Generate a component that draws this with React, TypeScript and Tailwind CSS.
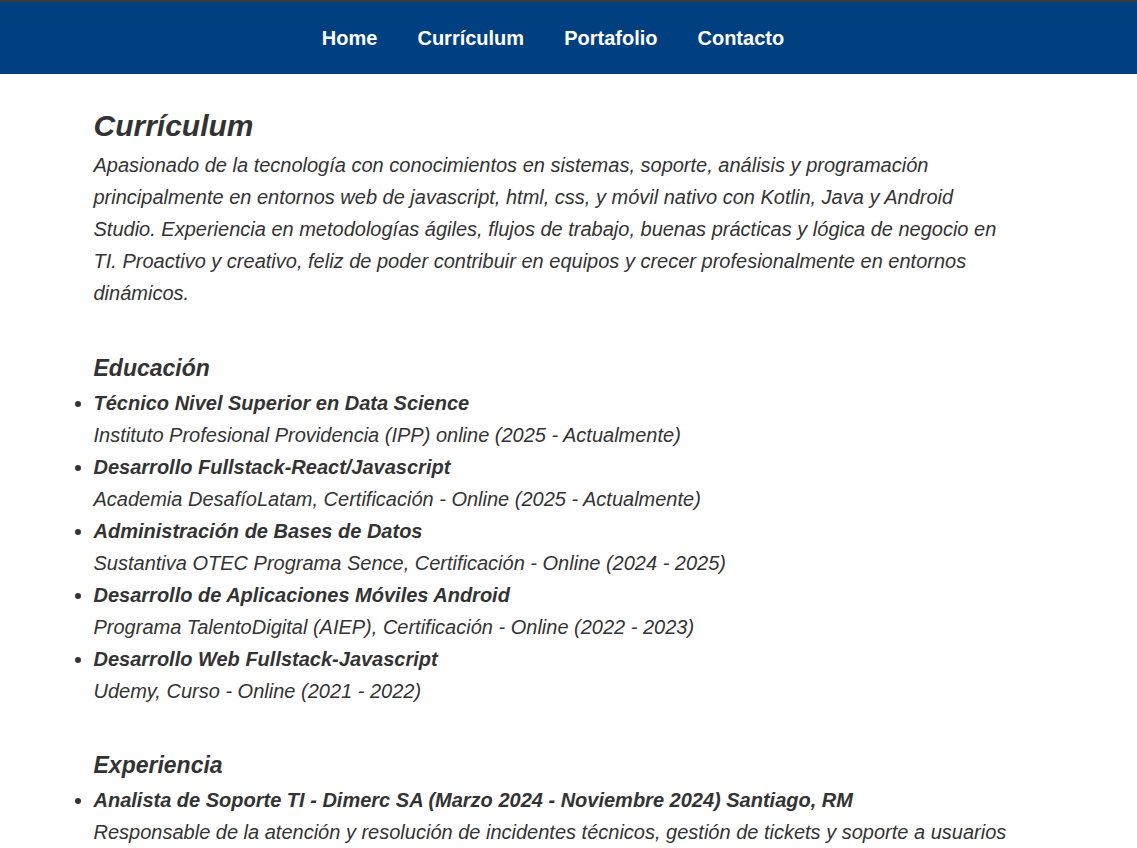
import React from "react";

const navLinks = ["Home", "Currículum", "Portafolio", "Contacto"];

const educacion = [
  {
    titulo: "Técnico Nivel Superior en Data Science",
    detalle: "Instituto Profesional Providencia (IPP) online (2025 - Actualmente)",
  },
  {
    titulo: "Desarrollo Fullstack-React/Javascript",
    detalle: "Academia DesafíoLatam, Certificación - Online (2025 - Actualmente)",
  },
  {
    titulo: "Administración de Bases de Datos",
    detalle: "Sustantiva OTEC Programa Sence, Certificación - Online (2024 - 2025)",
  },
  {
    titulo: "Desarrollo de Aplicaciones Móviles Android",
    detalle: "Programa TalentoDigital (AIEP), Certificación - Online (2022 - 2023)",
  },
  {
    titulo: "Desarrollo Web Fullstack-Javascript",
    detalle: "Udemy, Curso - Online (2021 - 2022)",
  },
];

const experiencia = [
  {
    titulo: "Analista de Soporte TI - Dimerc SA (Marzo 2024 - Noviembre 2024) Santiago, RM",
    detalle:
      "Responsable de la atención y resolución de incidentes técnicos, gestión de tickets y soporte a usuarios",
  },
];

function Lista({ items }: { items: { titulo: string; detalle: string }[] }) {
  return (
    <ul className="list-disc pl-0 mt-[6px] leading-[32px]">
      {items.map((it) => (
        <li key={it.titulo}>
          <strong className="font-bold">{it.titulo}</strong>
          <br />
          <span>{it.detalle}</span>
        </li>
      ))}
    </ul>
  );
}

export default function App() {
  return (
    <div className="min-h-screen bg-white italic text-[#333] font-['Liberation_Sans',Arial,sans-serif]">
      <nav className="h-[74px] bg-[#004080] border-t-2 border-[#3a3a3a] flex items-center justify-center">
        <ul className="flex gap-[40px] pr-[31px] not-italic">
          {navLinks.map((l) => (
            <li key={l}>
              <a href="#" className="text-white font-bold text-[20px]">
                {l}
              </a>
            </li>
          ))}
        </ul>
      </nav>

      <main className="max-w-[950px] mx-auto pr-[30px] pt-[35px] text-[20px]">
        <h2 className="text-[30px] font-bold leading-[34px]">Currículum</h2>
        <p className="mt-[6px] leading-[32px]">
          Apasionado de la tecnología con conocimientos en sistemas, soporte, análisis y programación
          principalmente en entornos web de javascript, html, css, y móvil nativo con Kotlin, Java y
          Android Studio. Experiencia en metodologías ágiles, flujos de trabajo, buenas prácticas y
          lógica de negocio en TI. Proactivo y creativo, feliz de poder contribuir en equipos y crecer
          profesionalmente en entornos dinámicos.
        </p>

        <h3 className="mt-[46px] text-[23px] font-bold leading-[26px]">Educación</h3>
        <Lista items={educacion} />

        <h3 className="mt-[45px] text-[23px] font-bold leading-[26px]">Experiencia</h3>
        <Lista items={experiencia} />
      </main>
    </div>
  );
}
